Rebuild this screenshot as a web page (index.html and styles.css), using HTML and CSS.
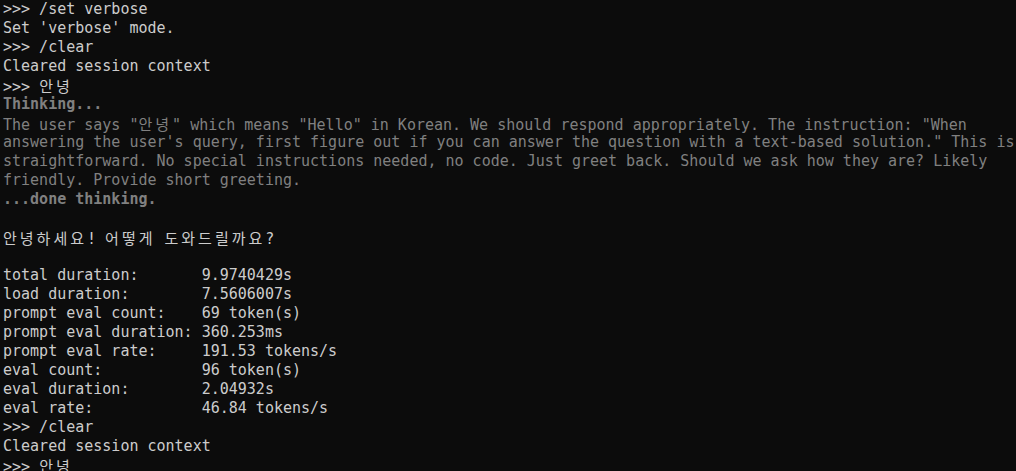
FILE: index.html
```html
<!DOCTYPE html>
<html lang="en">
<head>
<meta charset="utf-8">
<title>Terminal</title>
<link rel="stylesheet" href="styles.css">
</head>
<body>
<div class="term">
<div class="line">&gt;&gt;&gt; /set verbose</div>
<div class="line">Set 'verbose' mode.</div>
<div class="line">&gt;&gt;&gt; /clear</div>
<div class="line">Cleared session context</div>
<div class="line">&gt;&gt;&gt; <span class="ko">안녕</span></div>
<div class="line dim bold">Thinking...</div>
<div class="line dim">The user says "<span class="ko">안녕</span>" which means "Hello" in Korean. We should respond appropriately. The instruction: "When</div>
<div class="line dim">answering the user's query, first figure out if you can answer the question with a text-based solution." This is</div>
<div class="line dim">straightforward. No special instructions needed, no code. Just greet back. Should we ask how they are? Likely</div>
<div class="line dim">friendly. Provide short greeting.</div>
<div class="line dim bold">...done thinking.</div>
<div class="line"> </div>
<div class="line"><span class="ko">안녕하세요</span>! <span class="ko">어떻게</span> <span class="ko">도와드릴까요</span>?</div>
<div class="line"> </div>
<div class="line">total duration:       9.9740429s</div>
<div class="line">load duration:        7.5606007s</div>
<div class="line">prompt eval count:    69 token(s)</div>
<div class="line">prompt eval duration: 360.253ms</div>
<div class="line">prompt eval rate:     191.53 tokens/s</div>
<div class="line">eval count:           96 token(s)</div>
<div class="line">eval duration:        2.04932s</div>
<div class="line">eval rate:            46.84 tokens/s</div>
<div class="line">&gt;&gt;&gt; /clear</div>
<div class="line">Cleared session context</div>
<div class="line">&gt;&gt;&gt; <span class="ko">안녕</span></div>
</div>
</body>
</html>
```
FILE: styles.css
```css
html, body {
  margin: 0;
  padding: 0;
  background: #0c0c0c;
  height: 100%;
  overflow: hidden;
}
.term {
  padding: 0 0 0 3px;
  font-family: "DejaVu Sans Mono", "Liberation Mono", "Noto Sans CJK KR", monospace;
  font-size: 15px;
  line-height: 19px;
  color: #cccccc;
}
.line {
  white-space: pre;
  height: 19px;
}
.dim {
  color: #808080;
}
.bold {
  font-weight: bold;
}
.ko {
  font-family: "Noto Sans CJK KR", sans-serif;
  font-size: 15px;
  letter-spacing: 3px;
  line-height: 19px;
}
```
